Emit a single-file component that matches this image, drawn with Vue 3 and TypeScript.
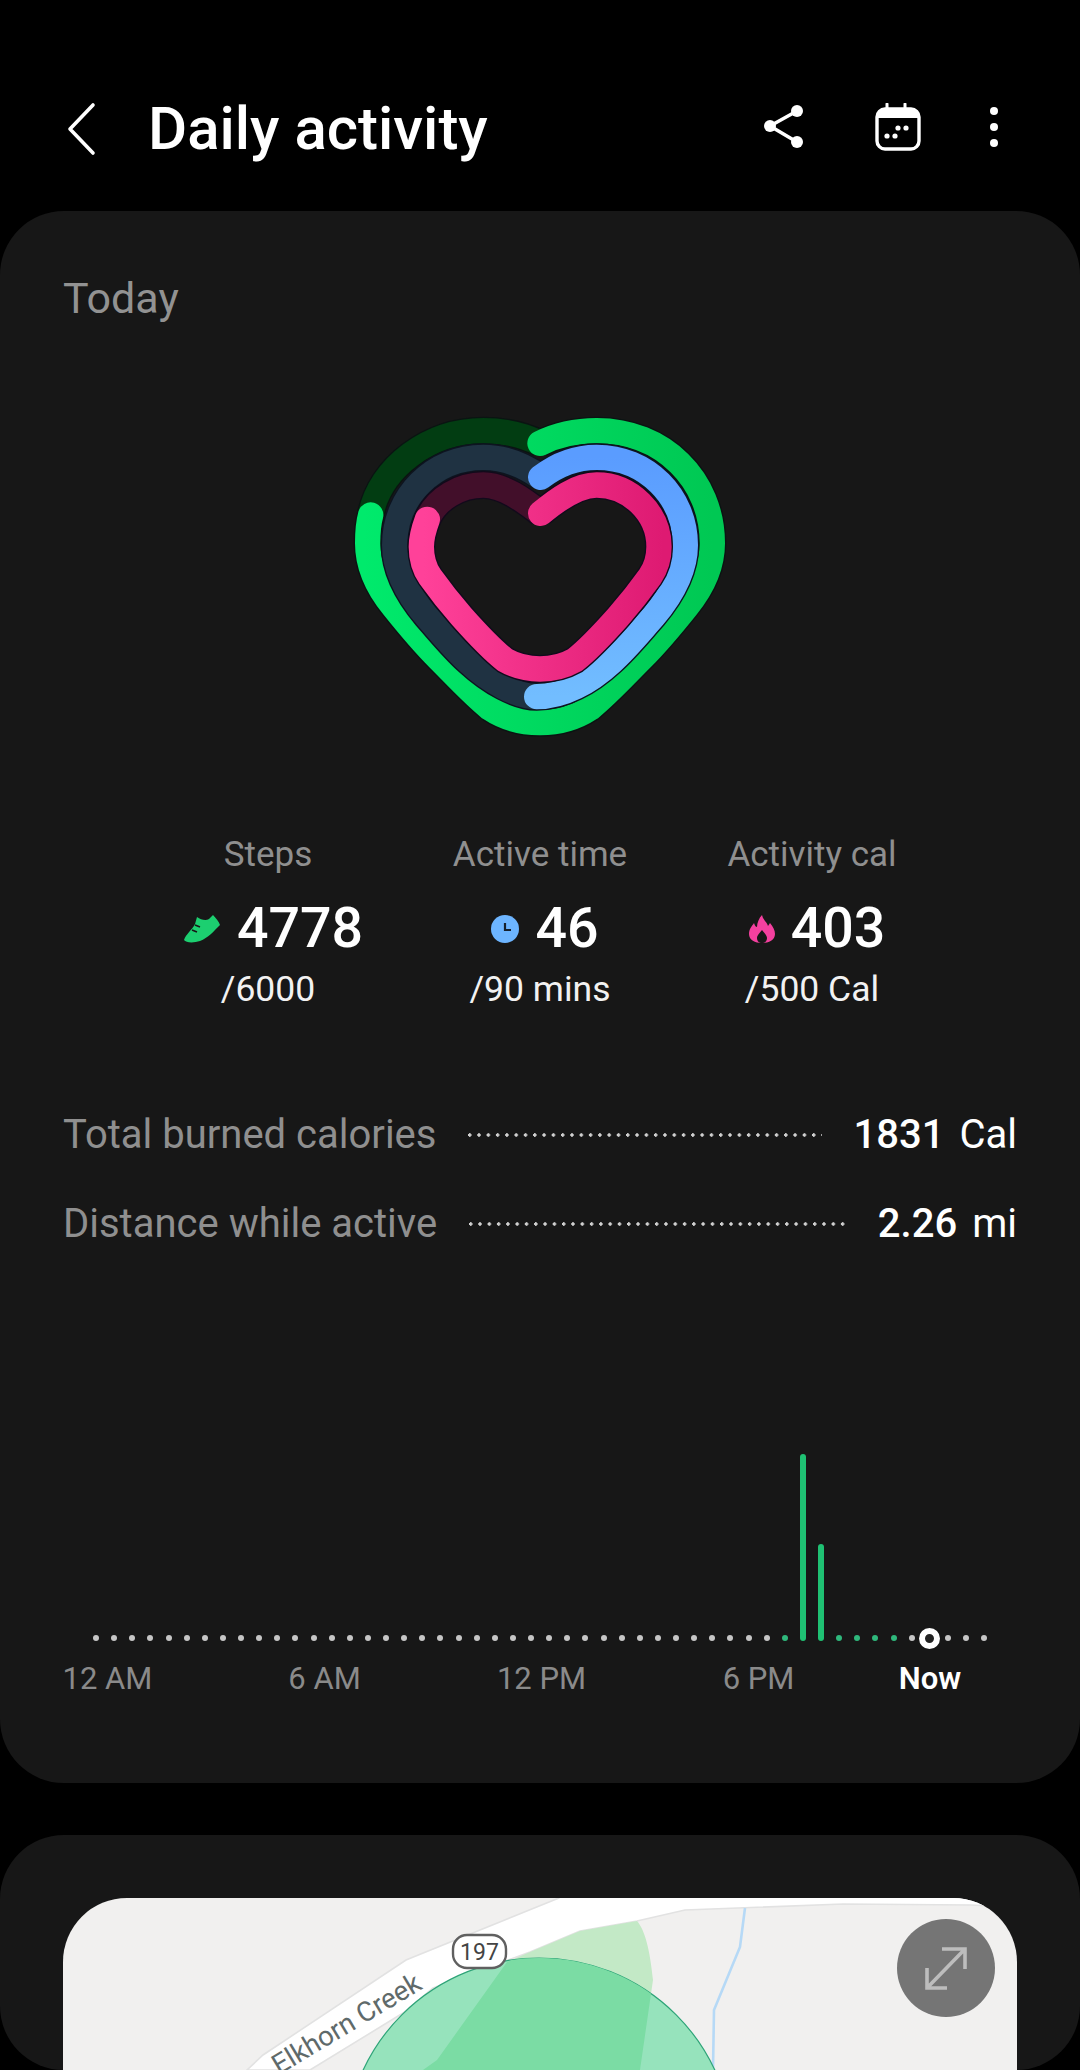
<template>
  <div class="page">
    <header class="topbar">
      <svg class="back" width="32" height="54" viewBox="0 0 32 54" aria-hidden="true">
        <path d="M28 3 L5 27 L28 51" fill="none" stroke="#fff" stroke-width="3.6" stroke-linecap="round" stroke-linejoin="round" />
      </svg>
      <h1 class="title">Daily activity</h1>
      <svg class="share" width="44" height="48" viewBox="0 0 44 48" aria-hidden="true">
        <path d="M34 8 L7 23 L34 39" fill="none" stroke="#fff" stroke-width="3.5" />
        <circle cx="34" cy="8" r="6" fill="#fff" />
        <circle cx="7" cy="23" r="6" fill="#fff" />
        <circle cx="34" cy="39" r="6" fill="#fff" />
      </svg>
      <svg class="calendar" width="46" height="48" viewBox="0 0 46 48" aria-hidden="true">
        <path d="M12 1 V8 M30 1 V8" stroke="#fff" stroke-width="3" stroke-linecap="round" />
        <rect x="2" y="6" width="42" height="40" rx="8" fill="none" stroke="#fff" stroke-width="3.4" />
        <path d="M2 15 V13 a7 7 0 0 1 7 -7 H37 a7 7 0 0 1 7 7 V15 Z" fill="#fff" />
        <circle cx="12" cy="33" r="2.6" fill="#fff" />
        <circle cx="20" cy="33" r="2.6" fill="#fff" />
        <circle cx="23" cy="25" r="2.6" fill="#fff" />
        <circle cx="31" cy="25" r="2.6" fill="#fff" />
      </svg>
      <svg class="kebab" width="10" height="42" viewBox="0 0 10 42" aria-hidden="true">
        <circle cx="5" cy="5" r="4" fill="#fff" />
        <circle cx="5" cy="21" r="4" fill="#fff" />
        <circle cx="5" cy="37" r="4" fill="#fff" />
      </svg>
    </header>

    <section class="card today-card">
      <div class="today">Today</div>

      <svg class="heart" width="420" height="350" viewBox="0 0 1260 1050" aria-hidden="true">
        <defs>
          <linearGradient id="ringGreen" gradientUnits="userSpaceOnUse" x1="100" y1="0" x2="1150" y2="0">
            <stop offset="0" stop-color="#00ea6c" />
            <stop offset="1" stop-color="#00c853" />
          </linearGradient>
          <linearGradient id="ringBlue" gradientUnits="userSpaceOnUse" x1="0" y1="170" x2="0" y2="890">
            <stop offset="0" stop-color="#5a9cff" />
            <stop offset="1" stop-color="#72bdff" />
          </linearGradient>
          <linearGradient id="ringPink" gradientUnits="userSpaceOnUse" x1="280" y1="0" x2="1000" y2="0">
            <stop offset="0" stop-color="#ff4199" />
            <stop offset="1" stop-color="#de1a72" />
          </linearGradient>
        </defs>
        <g fill="none" stroke-linecap="round">
          <path :d="green.value + green.track" stroke="#0a1412" stroke-width="84" stroke-linecap="butt" />
          <path :d="green.track" stroke="#023d12" stroke-width="76" />
          <path :d="green.value" stroke="url(#ringGreen)" stroke-width="76" />
          <path :d="blue.value + blue.track" stroke="#0d1420" stroke-width="84" stroke-linecap="butt" />
          <path :d="blue.track" stroke="#1f3242" stroke-width="76" />
          <path :d="blue.value" stroke="url(#ringBlue)" stroke-width="76" />
          <path :d="pink.value + pink.track" stroke="#120a1c" stroke-width="84" stroke-linecap="butt" />
          <path :d="pink.track" stroke="#420f2a" stroke-width="76" />
          <path :d="pink.value" stroke="url(#ringPink)" stroke-width="76" />
        </g>
      </svg>

      <div class="stats">
        <div v-for="s in stats" :key="s.label" class="stat">
          <div class="stat-label">{{ s.label }}</div>
          <div class="stat-value">
            <svg v-if="s.icon === 'shoe'" width="38" height="30" viewBox="0 0 38 30" aria-hidden="true">
              <path d="M1 26 C3 20 9 16 12 10 L14 3 C18 6 23 7 26 5 L30 1 C33 4 36 8 37 11 C31 17 25 24 17 27 C11 29 3 29 1 26 Z" fill="#1ccf70" />
              <path d="M12 11 L17 13 M9 16 L14 18" stroke="#171717" stroke-width="1.6" />
            </svg>
            <svg v-else-if="s.icon === 'clock'" width="28" height="28" viewBox="0 0 28 28" aria-hidden="true">
              <circle cx="14" cy="14" r="14" fill="#6db5ff" />
              <path d="M14 8 V15 H20" fill="none" stroke="#16202c" stroke-width="2.2" />
            </svg>
            <svg v-else width="26" height="28" viewBox="0 0 26 28" aria-hidden="true">
              <path d="M13 0 C14 5 18 7 19 11 L21 8 C24 12 26 15 26 19 C26 25 20 28 13 28 C6 28 0 25 0 19 C0 14 3 11 5 8 C6 11 7 12 8 12 C8 8 10 3 13 0 Z" fill="#f4409f" />
              <path d="M13 15 C15 18 18 20 18 23 C18 26 16 28 13 28 C10 28 8 26 8 23 C8 20 11 18 13 15 Z" fill="#171717" />
            </svg>
            <span class="stat-num">{{ s.value }}</span>
          </div>
          <div class="stat-goal">{{ s.goal }}</div>
        </div>
      </div>

      <div class="rows">
        <div v-for="r in rows" :key="r.label" class="row">
          <span class="row-label">{{ r.label }}</span>
          <span class="row-dots"></span>
          <span class="row-num">{{ r.value }}</span>
          <span class="row-unit">{{ r.unit }}</span>
        </div>
      </div>

      <div class="chart">
        <div v-for="(c, i) in slots" :key="i" class="slot">
          <span v-if="c.h" class="bar" :style="{ height: c.h + 'px' }"></span>
          <span v-else-if="c.kind === 'now'" class="now-ring"></span>
          <span v-else :class="['dot', { green: c.kind === 'green' }]"></span>
        </div>
      </div>

      <div class="axis">
        <span v-for="t in ticks" :key="t">{{ t }}</span>
        <span class="now">Now</span>
      </div>
    </section>

    <section class="card map-card">
      <div class="map">
        <svg width="954" height="172" viewBox="63 1898 954 172" aria-hidden="true">
          <defs>
            <clipPath id="zone"><circle cx="539" cy="2152" r="194" /></clipPath>
          </defs>
          <rect x="63" y="1898" width="954" height="172" fill="#f1f0ef" />
          <path d="M559 1898 L406 1960 L263 2055 L247 2070 L310 2070 L403 2013 L433 1988 L530 1952 L580 1931 L637 1921 L685 1910 L843 1904 L970 1905 L1017 1907 L1017 1890 L559 1890 Z" fill="#fff" stroke="#e2e2e2" stroke-width="1.6" />
          <path d="M745 1908 L740 1947 L714 2010 L713 2070" fill="none" stroke="#b6d9f6" stroke-width="2.6" />
          <path d="M507 1962 L530 1952 L580 1931 L637 1921 C645 1930 650 1950 653 1980 L640 2070 L423 2070 L437 2060 Z" fill="#c3e9c6" />
          <circle cx="539" cy="2152" r="194" fill="#96e3bc" stroke="#2ea478" stroke-width="1.2" />
          <g clip-path="url(#zone)">
            <path d="M507 1962 L530 1952 L580 1931 L637 1921 C645 1930 650 1950 653 1980 L640 2070 L423 2070 L437 2060 Z" fill="#7bdca4" />
          </g>
          <text class="road-name" transform="translate(279 2075) rotate(-31)">Elkhorn Creek</text>
          <rect x="453" y="1935" width="53" height="33" rx="14" fill="#fff" stroke="#606060" stroke-width="2.4" />
          <text class="shield" x="479.5" y="1960" text-anchor="middle">197</text>
        </svg>
        <button class="expand" type="button" aria-label="Expand map">
          <svg width="98" height="98" viewBox="0 0 98 98" aria-hidden="true">
            <path d="M30 69 L68 30 M45 30 H68 V50 M30 49 V69 H50" fill="none" stroke="#bdbdbd" stroke-width="3.6" />
          </svg>
        </button>
      </div>
    </section>
  </div>
</template>

<script setup lang="ts">
type Slot = { kind: 'grey' | 'green' | 'now'; h: number }

const green = {
  value:
    'M630 130 C680 105 740 92 800 92 C1000 92 1147 240 1147 430 C1147 500 1115 565 1070 620 C1030 670 985 725 935 775 C885 825 835 880 780 925 C735 955 685 968 630 968 C575 968 525 955 480 925 C425 880 375 825 325 775 C275 725 230 670 190 620 C145 565 113 500 113 430 C113 400 115 370 122 345',
  track: 'M122 345 C150 200 300 92 460 92 C520 92 580 105 630 130',
}

const blue = {
  value:
    'M632 232 C680 195 740 172 800 172 C950 172 1066 290 1066 435 C1066 510 1025 585 970 650 C930 695 890 745 845 785 C780 845 700 890 620 890',
  track:
    'M620 890 C560 890 480 845 415 785 C370 745 330 695 290 650 C235 585 194 510 194 435 C194 290 310 172 460 172 C520 172 580 195 632 232',
}

const pink = {
  value:
    'M632 340 C680 300 740 255 800 255 C900 255 987 340 987 440 C987 475 977 505 960 530 C930 572 900 610 865 650 C825 695 780 745 735 780 C700 800 665 807 630 807 C595 807 560 800 525 780 C480 745 435 695 395 650 C360 610 330 572 300 530 C283 505 274 475 274 440 C274 415 282 385 292 358',
  track: 'M292 358 C320 295 390 255 460 255 C520 255 580 300 632 340',
}

const stats = [
  { label: 'Steps', value: '4778', goal: '/6000', icon: 'shoe' },
  { label: 'Active time', value: '46', goal: '/90 mins', icon: 'clock' },
  { label: 'Activity cal', value: '403', goal: '/500 Cal', icon: 'flame' },
]

const rows = [
  { label: 'Total burned calories', value: '1831', unit: 'Cal' },
  { label: 'Distance while active', value: '2.26', unit: 'mi' },
]

const ticks = ['12 AM', '6 AM', '12 PM', '6 PM']

const greenSlots = [38, 41, 42, 43, 44]
const slots: Slot[] = Array.from({ length: 50 }, (_, i) => {
  if (i === 39) return { kind: 'green', h: 187 }
  if (i === 40) return { kind: 'green', h: 97 }
  if (i === 46) return { kind: 'now', h: 0 }
  return { kind: greenSlots.includes(i) ? 'green' : 'grey', h: 0 }
})
</script>

<style>
body {
  background: #000;
}
</style>

<style scoped>
.page {
  width: 1080px;
  height: 2070px;
  overflow: hidden;
  background: #000;
  font-family: Roboto, "Liberation Sans", sans-serif;
  color: #fff;
}

.topbar {
  display: flex;
  align-items: center;
  height: 165px;
  padding: 92px 0 0 65px;
  box-sizing: border-box;
}

.back {
  flex: none;
}

.title {
  flex: 1;
  margin: 0 0 0 51px;
  font-size: 60px;
  line-height: 64px;
  font-weight: 500;
}

.share {
  flex: none;
  margin: 0 68px 3px 0;
}

.calendar {
  flex: none;
  margin: 0 68px 3px 0;
}

.kebab {
  flex: none;
  margin: 0 81px 3px 0;
}

.card {
  background: #171717;
  border-radius: 64px;
  box-sizing: border-box;
  padding: 0 63px;
}

.today-card {
  margin-top: 46px;
  height: 1572px;
  padding-top: 62px;
}

.today {
  font-size: 43px;
  line-height: 50px;
  color: #929292;
}

.heart {
  display: block;
  margin: 77px auto 0;
}

.stats {
  display: grid;
  grid-template-columns: repeat(3, 272px);
  justify-content: center;
  margin-top: 85px;
}

.stat {
  display: flex;
  flex-direction: column;
  align-items: center;
}

.stat-label {
  font-size: 35px;
  line-height: 40px;
  color: #8f8f8f;
}

.stat-value {
  display: flex;
  align-items: center;
  gap: 16px;
  margin: 24px 0 0 10px;
}

.stat-num {
  font-size: 55.5px;
  line-height: 60px;
  font-weight: 500;
}

.stat-goal {
  font-size: 35.5px;
  line-height: 40px;
  margin-top: 10px;
  color: #f2f2f2;
}

.rows {
  display: flex;
  flex-direction: column;
  gap: 41px;
  margin-top: 102px;
}

.row {
  display: flex;
  align-items: center;
  height: 48px;
  font-size: 40px;
  line-height: 48px;
}

.row-label {
  color: #8f8f8f;
}

.row-dots {
  flex: 1;
  height: 4px;
  margin: 0 32px;
  background: radial-gradient(circle at 1.7px 2px, #d0d0d0 1.5px, transparent 1.9px) 0 0 / 9.3px 4px repeat-x;
}

.row-num {
  font-weight: 500;
  margin-right: 15px;
}

.chart {
  display: flex;
  align-items: flex-end;
  height: 190px;
  margin: 203px 0 0 24px;
}

.slot {
  flex: none;
  display: flex;
  justify-content: center;
  align-items: flex-end;
  width: 18.13px;
}

.dot {
  width: 6px;
  height: 6px;
  border-radius: 50%;
  background: #c6c6c6;
}

.dot.green {
  background: #2fb87c;
}

.bar {
  flex: none;
  width: 5.5px;
  border-radius: 3px;
  background: #1fc173;
}

.now-ring {
  flex: none;
  width: 21px;
  height: 21px;
  box-sizing: border-box;
  margin-bottom: -7.5px;
  border: 6px solid #fff;
  border-radius: 50%;
  background: #222;
}

.axis {
  display: grid;
  grid-template-columns: repeat(4, 217px) 126px;
  margin: 18px 0 0 -64px;
  font-size: 31px;
  line-height: 40px;
  color: #8a8a8a;
  text-align: center;
}

.now {
  color: #fff;
  font-weight: 600;
}

.map-card {
  margin-top: 52px;
  height: 235px;
  padding-top: 63px;
}

.map {
  position: relative;
  height: 172px;
  overflow: hidden;
  border-radius: 64px 64px 0 0;
}

.map svg {
  display: block;
}

.road-name {
  font-family: Roboto, sans-serif;
  font-size: 27.5px;
  fill: #5f6a6a;
}

.shield {
  font-family: Roboto, sans-serif;
  font-size: 23px;
  fill: #444;
}

.expand {
  position: absolute;
  top: 21px;
  right: 22px;
  width: 98px;
  height: 98px;
  padding: 0;
  border: 0;
  border-radius: 50%;
  background: #757575;
}
</style>
